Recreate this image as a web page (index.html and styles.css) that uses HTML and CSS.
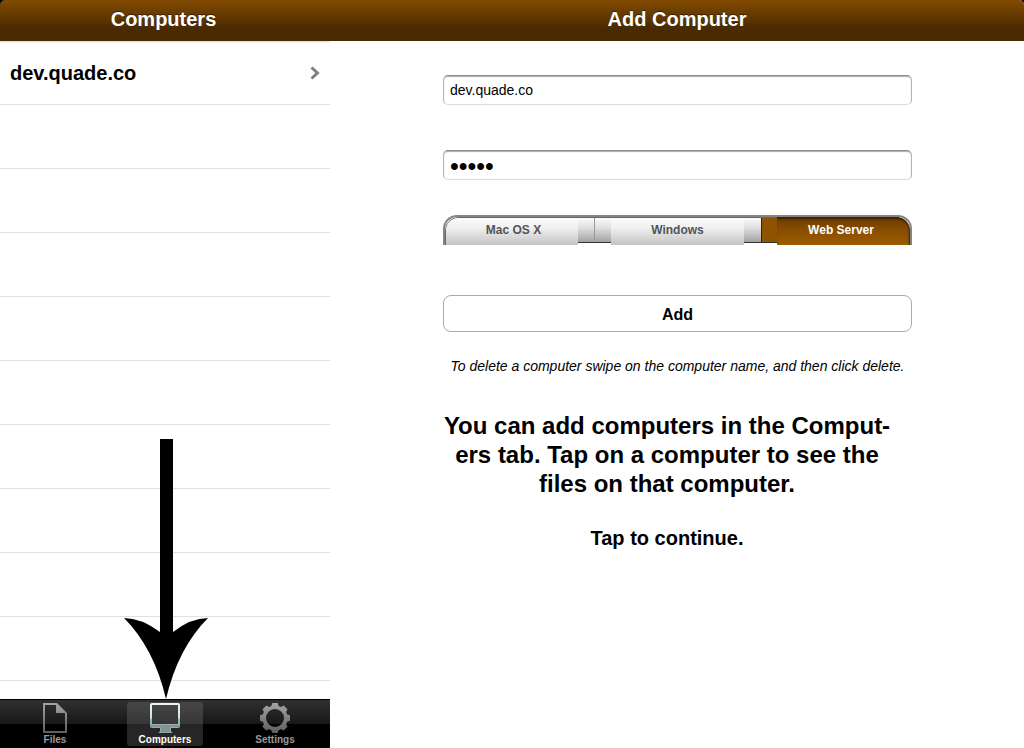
FILE: index.html
```html
<!DOCTYPE html>
<html lang="en">
<head>
<meta charset="utf-8">
<title>Add Computer</title>
<link rel="stylesheet" href="styles.css">
</head>
<body>
<div class="app">
  <section class="sidebar">
    <header class="bar bar-left"><h1 class="bar-title">Computers</h1></header>
    <ul class="list">
      <li class="row"><a class="row-link" href="#computer">dev.quade.co
        <svg class="chevron" width="10" height="14" viewBox="0 0 10 14" aria-hidden="true"><path d="M1.500 1.500 7.500 7 1.500 12.500" fill="none" stroke="#808080" stroke-width="3"/></svg></a></li>
      <li class="row"></li><li class="row"></li><li class="row"></li>
      <li class="row"></li><li class="row"></li><li class="row"></li>
      <li class="row"></li><li class="row"></li><li class="row"></li>
    </ul>
    <nav class="tabs">
      <a class="tab" href="#files">
        <svg class="tab-icon" width="32" height="32" viewBox="0 0 32 32" aria-hidden="true">
          <defs><linearGradient id="gray" x1="0" y1="0" x2="0" y2="32" gradientUnits="userSpaceOnUse"><stop offset="0" stop-color="#a6a6a6"/><stop offset="1" stop-color="#5c5c5c"/></linearGradient></defs>
          <path fill="url(#gray)" fill-rule="evenodd" d="M4 1H18L28 11V31H4ZM6 3V29H26V11H17V3Z"/>
        </svg>
        <span class="tab-label">Files</span>
      </a>
      <a class="tab tab-active" href="#computers" aria-current="page">
        <svg class="tab-icon" width="32" height="32" viewBox="0 0 32 32" aria-hidden="true">
          <defs><linearGradient id="screen" x1="0" y1="0" x2="0" y2="1"><stop offset="0" stop-color="#f0f5f5"/><stop offset=".5" stop-color="#cfdede"/><stop offset=".55" stop-color="#93b7ba"/><stop offset="1" stop-color="#86a9ac"/></linearGradient></defs>
          <path fill="url(#screen)" fill-rule="evenodd" d="M3 1H29Q31 1 31 3V24Q31 26 29 26H22V29Q22 30 24 31H9Q11 30 11 29V26H3Q1 26 1 24V3Q1 1 3 1ZM3 3V22H29V3Z"/>
          <path fill="#8a8f90" d="M2 23H30V25H21V30H12V25H2Z"/>
        </svg>
        <span class="tab-label">Computers</span>
      </a>
      <a class="tab" href="#settings">
        <svg class="tab-icon" width="32" height="32" viewBox="0 0 32 32" aria-hidden="true">
          <defs>
            <path id="tooth" d="M12 5 13.300 1H18.700L20 5Z"/>
            <mask id="gear">
              <circle cx="16" cy="16" r="10.800" fill="none" stroke="#fff" stroke-width="3.600"/>
              <g fill="#fff">
                <use href="#tooth"/><use href="#tooth" transform="rotate(45 16 16)"/>
                <use href="#tooth" transform="rotate(90 16 16)"/><use href="#tooth" transform="rotate(135 16 16)"/>
                <use href="#tooth" transform="rotate(180 16 16)"/><use href="#tooth" transform="rotate(225 16 16)"/>
                <use href="#tooth" transform="rotate(270 16 16)"/><use href="#tooth" transform="rotate(315 16 16)"/>
              </g>
            </mask>
          </defs>
          <rect width="32" height="32" fill="url(#gray)" mask="url(#gear)"/>
        </svg>
        <span class="tab-label">Settings</span>
      </a>
    </nav>
    <svg class="pointer" width="84" height="260" viewBox="0 0 84 260" aria-hidden="true"><path d="M36 0H49V193Q67 179 84 179Q54 209 42 260Q30 209 0 179Q17 179 36 193Z"/></svg>
  </section>

  <main class="detail">
    <header class="bar bar-right"><h2 class="bar-title">Add Computer</h2></header>
    <form class="form">
      <input class="field" type="text" value="dev.quade.co" aria-label="Computer address">
      <input class="field field-secret" type="password" value="quade" aria-label="Password">
      <fieldset class="segments" aria-label="Computer type">
        <label class="segment segment-first"><input class="segment-radio" type="radio" name="type">Mac OS X</label>
        <span class="joint"></span>
        <label class="segment"><input class="segment-radio" type="radio" name="type">Windows</label>
        <span class="joint joint-active"></span>
        <label class="segment segment-active"><input class="segment-radio" type="radio" name="type" checked>Web Server</label>
      </fieldset>
      <button class="add" type="button">Add</button>
      <p class="hint">To delete a computer swipe on the computer name, and then click delete.</p>
    </form>
    <div class="tour">
      <p class="tour-text">You can add computers in the Comput-<br>ers tab. Tap on a computer to see the<br>files on that computer.</p>
      <p class="tour-next">Tap to continue.</p>
    </div>
  </main>
</div>
</body>
</html>
```
FILE: styles.css
```css
* { box-sizing: border-box; }
body {
  margin: 0;
  background: #000;
  color: #000;
  font-family: "Liberation Sans", Arial, sans-serif;
}
h1, h2, p, ul { margin: 0; padding: 0; }
a { color: inherit; text-decoration: none; }

.app { display: flex; height: 100vh; }
.sidebar {
  position: relative;
  display: flex;
  flex-direction: column;
  flex: 0 0 330px;
}
.detail {
  display: flex;
  flex-direction: column;
  flex: 1;
  border-top-right-radius: 5px;
  background: #fff;
}

.bar {
  display: flex;
  align-items: center;
  justify-content: center;
  flex: 0 0 41px;
  padding-bottom: 4px;
  background: linear-gradient(#824b00, #4a2a00 70%, #482900);
}
.bar-left { border-top-left-radius: 5px; }
.bar-right { border-top-right-radius: 5px; }
.bar-title {
  color: #fff;
  font-size: 20px;
  line-height: 24px;
  text-shadow: 0 -1px 0 rgba(0, 0, 0, .5);
}
.bar-left .bar-title { padding-right: 3px; }

.list {
  flex: 1;
  min-height: 0;
  overflow: hidden;
  background: linear-gradient(#e4d4d4, #fff 2px);
  list-style: none;
}
.row { height: 64px; border-bottom: 1px solid #e0e0e0; }
.row-link {
  display: flex;
  align-items: center;
  justify-content: space-between;
  height: 100%;
  padding: 1px 10px 0;
  font-size: 20px;
  font-weight: bold;
}

.tabs {
  display: grid;
  grid-template-columns: repeat(3, 76px);
  justify-content: space-between;
  flex: 0 0 49px;
  padding: 2px 17px;
  border-top: 1px solid #000;
  background: linear-gradient(#303030, #181818 24px, #000 24px);
}
.tab {
  display: flex;
  flex-direction: column;
  align-items: center;
  border-radius: 3px;
  color: #9a9a9a;
  font-size: 10px;
  font-weight: bold;
  line-height: 12px;
}
.tab-active {
  background: linear-gradient(#464646, #373737 22px, #262626 22px);
  color: #fff;
}

.pointer {
  position: absolute;
  bottom: 49px;
  left: 124px;
}

.form {
  display: flex;
  flex-direction: column;
  padding: 34px 112px 0 113px;
}
.field {
  width: 100%;
  height: 30px;
  margin-bottom: 45px;
  padding: 0 6px;
  border: 1px solid;
  border-color: #8e8e8e #b4b4b4 #dcdcdc;
  border-radius: 5px;
  background: #fff;
  box-shadow: inset 0 1px 1px #aaa;
  color: #000;
  font: 14px "Liberation Sans", Arial, sans-serif;
}
.field-secret {
  margin-bottom: 35px;
  padding-top: 3px;
  font-size: 25px;
}

.segments {
  display: grid;
  grid-template-columns: 1fr 33px 1fr 33px 1fr;
  height: 30px;
  margin: 0 0 50px;
  padding: 0;
  overflow: hidden;
  border: solid #858585;
  border-width: 2px 2px 0;
  border-radius: 14px 14px 0 0;
}
.segment {
  display: flex;
  align-items: center;
  justify-content: center;
  padding-bottom: 2px;
  background: linear-gradient(#fdfdfd, #efefef 40%, #c3c3c3);
  box-shadow: inset 0 1px 0 #666;
  color: #50545a;
  font-size: 12px;
  font-weight: bold;
}
.segment-first {
  padding-left: 4px;
  border-top-left-radius: 12px;
  box-shadow: inset 1px 1px 0 #666;
}
.segment-active {
  padding-right: 5px;
  border-top-right-radius: 12px;
  background: linear-gradient(#673900, #854b00 40%, #9d5c00);
  box-shadow: inset -1px 2px 2px #3b2100;
  color: #fff;
}
.segment-radio {
  appearance: none;
  width: 0;
  height: 0;
  margin: 0;
}
.joint {
  height: 26px;
  border-top: 1px solid #666;
  border-bottom: 1px solid #333;
  background: linear-gradient(90deg, transparent 16px, #999 16px, #999 17px, transparent 17px), linear-gradient(#fafafa, #e0e0e0 40%, #a2a2a2);
}
.joint-active {
  background: linear-gradient(90deg, transparent 17px, #3b2100 17px, #3b2100 18px, #8f5300 18px), linear-gradient(#fafafa, #e0e0e0 40%, #a2a2a2);
}

.add {
  height: 37px;
  margin-bottom: 25px;
  padding: 2px 0 0;
  border: 1px solid #aaa;
  border-radius: 8px;
  background: #fff;
  color: #000;
  font: bold 16px "Liberation Sans", Arial, sans-serif;
}
.hint {
  font-size: 14px;
  font-style: italic;
  line-height: 18px;
  text-align: center;
  white-space: nowrap;
}

.tour {
  padding: 36px 20px 0 0;
  font-weight: bold;
  text-align: center;
}
.tour-text { font-size: 24px; line-height: 29px; }
.tour-next { margin-top: 28px; font-size: 20px; line-height: 24px; }
```
